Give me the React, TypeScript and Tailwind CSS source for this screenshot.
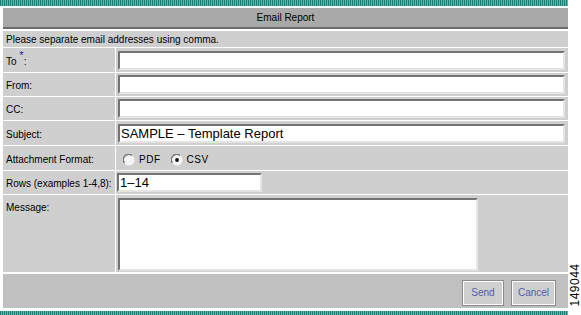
import React from "react";

const stripe =
  "bg-[repeating-linear-gradient(90deg,#1d7a74_0px,#1d7a74_1px,#6db3ab_1px,#6db3ab_2px)]";

function Field({ w, value, big }: { w: string; value?: string; big?: boolean }) {
  return (
    <div
      className={`${w} h-[19px] bg-white border-2 border-t-[#747474] border-l-[#747474] border-b-[#e4e4e4] border-r-[#e4e4e4] flex items-center pl-[1px] ${big ? "text-[13px]" : "text-[10px]"} text-black leading-none`}
    >
      {value}
    </div>
  );
}

function Radio({ checked }: { checked?: boolean }) {
  return (
    <svg width="12" height="12" viewBox="0 0 12 12">
      <circle cx="6" cy="6" r="5.5" fill="#f4f4f4" />
      <path d="M1.4 8.8 A5.3 5.3 0 0 1 8.8 1.4" stroke="#7a7a7a" strokeWidth="1.5" fill="none" />
      {checked && <circle cx="6" cy="6" r="1.9" fill="#111" />}
    </svg>
  );
}

function Row({
  label,
  h,
  children,
  top,
}: {
  label: React.ReactNode;
  h: string;
  children: React.ReactNode;
  top?: boolean;
}) {
  return (
    <div className={`flex ${h} border-t border-white`}>
      <div className={`w-[113px] shrink-0 bg-[#cfcfcf] px-[3px] flex ${top ? "items-start pt-[5px]" : "items-center pt-[2px]"} border-r border-white`}>
        {label}
      </div>
      <div className={`flex-1 bg-[#cfcfcf] pl-[2px] pr-[3px] flex ${top ? "items-start pt-[3px]" : "items-center"}`}>{children}</div>
    </div>
  );
}

export default function App() {
  return (
    <div
      className="w-[581px] h-[315px] bg-white relative overflow-hidden text-[10px] text-black"
      style={{ fontFamily: "'Liberation Sans', Arial, sans-serif" }}
    >
      <div className="w-[568px]">
        <div className={`h-[6px] ${stripe}`} />
        <div className="h-[2px]" />
        <div className="ml-[3px]">
          {/* header */}
          <div className="h-[21px] bg-[#a9a9a9] flex items-center justify-center text-[10px] border-b-[2px] border-[#6e6e6e]">
            Email Report
          </div>
          <div className="h-[18px] bg-[#cfcfcf] border-t-[2px] border-white flex items-center px-[3px] pt-[1px]">
            Please separate email addresses using comma.
          </div>
          <Row h="h-[25px]" label={<span>To <sup className="text-[#1a1aa8] text-[11px]">*</sup>:</span>}>
            <Field w="w-full" />
          </Row>
          <Row h="h-[24px]" label="From:">
            <Field w="w-full" />
          </Row>
          <Row h="h-[24px]" label="CC:">
            <Field w="w-full" />
          </Row>
          <Row h="h-[25px]" label="Subject:">
            <Field w="w-full" value="SAMPLE – Template Report" big />
          </Row>
          <Row h="h-[25px]" label="Attachment Format:">
            <div className="flex items-center pl-[5px] gap-[4px] pt-[3px] tracking-[0.5px]">
              <Radio />
              <span className="mr-[6px]">PDF</span>
              <Radio checked />
              <span>CSV</span>
            </div>
          </Row>
          <Row h="h-[24px]" label="Rows (examples 1-4,8):">
            <div className="-ml-[1px]">
              <Field w="w-[145px]" value="1–14" big />
            </div>
          </Row>
          <Row h="h-[78px]" label="Message:" top>
            <div className="w-[360px] h-[73px] bg-white border-2 border-t-[#747474] border-l-[#747474] border-b-[#e4e4e4] border-r-[#e4e4e4]" />
          </Row>
          <div className="h-[36px] bg-[#c0c0c0] border-t-[2px] border-white flex items-center justify-end gap-[7px] pr-[12px] pt-[3px]">
            {["Send", "Cancel"].map((b) => (
              <div
                key={b}
                className="h-[26px] border border-[#8a8a8a] flex items-center justify-center text-[#5757b0] text-[10px] bg-[#cfcfcf] shadow-[inset_1px_1px_0_#ffffff,inset_-1px_-1px_0_#ffffff]"
                style={{ width: b === "Send" ? 42 : 45 }}
              >
                {b}
              </div>
            ))}
          </div>
        </div>
        <div className="h-[3px]" />
        <div className={`h-[4px] ${stripe}`} />
      </div>
      <div className="absolute left-[569px] top-[256px] w-[12px] h-[57px] flex items-center justify-center">
        <span className="-rotate-90 text-[12px] whitespace-nowrap tracking-[0.5px]">149044</span>
      </div>
    </div>
  );
}
